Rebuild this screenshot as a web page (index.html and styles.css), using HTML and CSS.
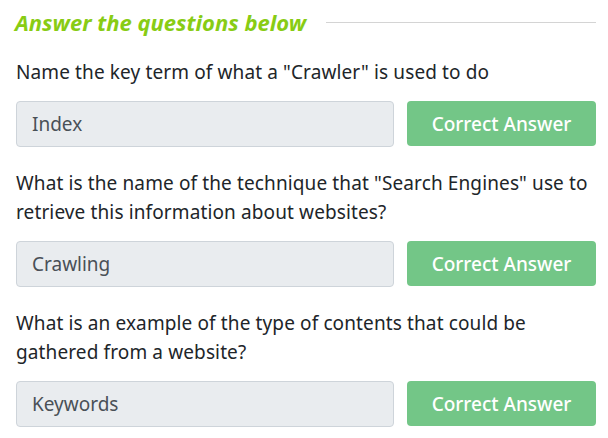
FILE: index.html
```html
<!DOCTYPE html>
<html>
<head>
<meta charset="utf-8">
<link rel="stylesheet" href="styles.css">
</head>
<body>
<div class="page">
  <div class="heading-row">
    <h2 class="heading">Answer the questions below</h2>
    <div class="rule"></div>
  </div>
  <div class="question">
    <p class="q-text">Name the key term of what a "Crawler" is used to do</p>
    <div class="answer-row">
      <div class="answer-input">Index</div>
      <button class="answer-btn">Correct Answer</button>
    </div>
  </div>
  <div class="question">
    <p class="q-text">What is the name of the technique that "Search Engines" use to retrieve this information about websites?</p>
    <div class="answer-row">
      <div class="answer-input">Crawling</div>
      <button class="answer-btn">Correct Answer</button>
    </div>
  </div>
  <div class="question">
    <p class="q-text">What is an example of the type of contents that could be gathered from a website?</p>
    <div class="answer-row">
      <div class="answer-input">Keywords</div>
      <button class="answer-btn">Correct Answer</button>
    </div>
  </div>
</div>
</body>
</html>
```
FILE: styles.css
```css
* { box-sizing: border-box; }
html, body { margin: 0; padding: 0; background: #ffffff; }
body {
  font-family: "Noto Sans", "Open Sans", sans-serif;
  color: #212529;
}
.page {
  padding: 8px 12px 0 16px;
}
.heading-row {
  display: flex;
  align-items: center;
  height: 28px;
}
.heading {
  margin: 0 0 0 -1px;
  font-size: 22px;
  font-weight: 700;
  font-style: italic;
  color: #88cc14;
  white-space: nowrap;
}
.rule {
  flex: 1;
  height: 1px;
  background: #d4d4d4;
  margin-left: 20px;
}
.question { margin-top: 22px; }
.q-text {
  margin: 0 0 14px 0;
  font-size: 19px;
  letter-spacing: 0.12px;
  line-height: 29px;
}
.answer-row {
  display: flex;
  gap: 13px;
}
.answer-input {
  flex: 1;
  height: 46px;
  background: #e9ecef;
  border: 1px solid #ced4da;
  border-radius: 4px;
  padding: 0 15px;
  display: flex;
  align-items: center;
  font-size: 19px;
  color: #495057;
}
.answer-btn {
  width: 189px;
  height: 45px;
  border: none;
  border-radius: 4px;
  background: #73c687;
  color: #ffffff;
  font-family: inherit;
  font-size: 19px;
  font-weight: 500;
  padding: 0;
}
```
